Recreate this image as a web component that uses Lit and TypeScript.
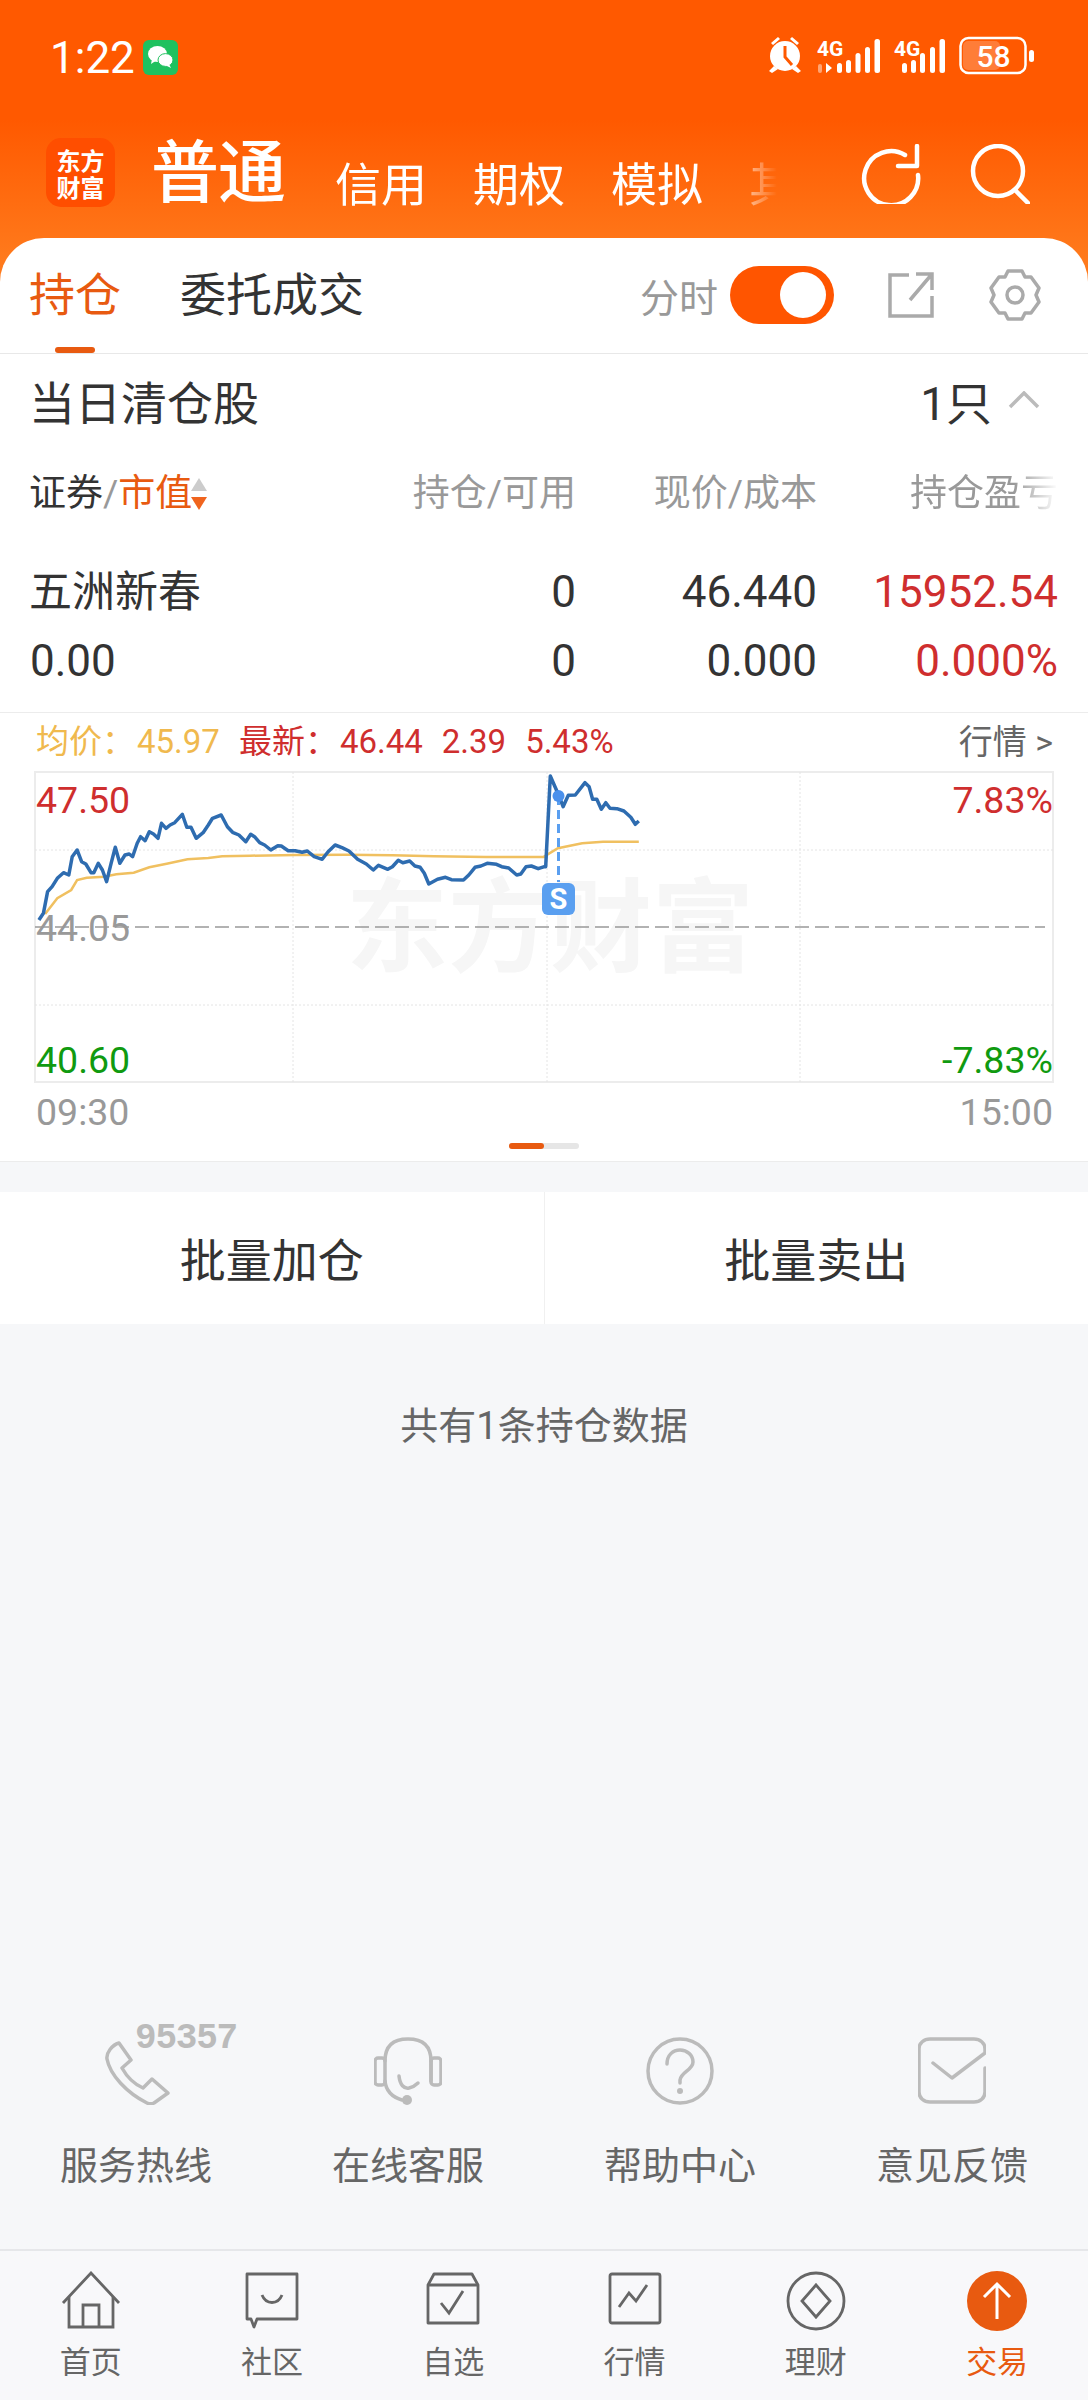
import { LitElement, html, css, svg } from "lit";
import { customElement } from "lit/decorators.js";

const p3: number[][] = [[112,630],[125,610],[137,545],[150,530],[165,505],[183,488],[198,495],[208,440],[222,420],[235,455],[247,462],[262,488],[270,488],[283,460],[295,480],[307,515],[320,460],[332,412],[345,460],[360,435],[372,432],[382,440],[395,400],[405,380],[418,392],[430,365],[442,372],[455,385],[465,340],[478,355],[490,345],[503,338],[525,313],[538,352],[550,352],[565,385],[585,368],[600,345],[612,325],[637,315],[655,350],[670,367],[688,375],[708,395],[722,373],[733,380],[748,398],[762,405],[780,420],[800,407],[810,408],[830,422],[850,422],[870,427],[885,423],[905,440],[928,448],[945,425],[965,405],[985,413],[1005,423],[1030,448],[1055,462],[1075,480],[1090,466],[1117,478],[1130,470],[1147,451],[1160,458],[1180,453],[1195,468],[1210,472],[1222,490],[1235,522],[1260,508],[1283,502],[1300,509],[1335,510],[1350,495],[1368,472],[1385,468],[1403,460],[1430,463],[1445,470],[1465,474],[1488,495],[1500,492],[1515,470],[1530,468],[1550,476],[1568,470]];
const p4: number[][] = [[5,470],[18,198],[42,255],[55,290],[70,256],[90,255],[118,218],[130,230],[140,268],[152,268],[165,298],[178,278],[190,295],[210,296],[230,303],[250,322],[263,343],[273,333]];
const y3: number[][] = [[130,612],[165,565],[205,540],[222,510],[250,503],[300,500],[335,493],[385,488],[430,472],[480,461],[540,448],[600,444],[640,439],[720,437],[850,435],[1000,434],[1130,436],[1250,439],[1400,441],[1568,441]];
const y4: number[][] = [[0,440],[40,415],[110,400],[170,395],[273,395]];
const pts = (a: number[][], b: number[][]) =>
  [...a.map(([x, y]) => [x / 2.88, y / 3 + 710]), ...b.map(([x, y]) => [544 + x / 2.88, y / 3 + 710])]
    .map(([x, y]) => `${x.toFixed(1)},${y.toFixed(1)}`)
    .join(" ");

const services = [
  { label: "服务热线", icon: svg`<path d="M17 6L29 23L20 31C25 40 32 47 41 51L50 42L66 56L52 66C50 67 47 67 45 66C25 56 8 38 5 22C4 16 10 8 17 6Z"/>` },
  { label: "在线客服", icon: svg`<path d="M11 24C11 8 20 2 34 2C48 2 57 8 57 24M11 44C12 54 18 60 28 63"/><path d="M57 44V24"/><rect x="1" y="21" width="10" height="27" rx="3"/><rect x="57" y="21" width="10" height="27" rx="3"/><path d="M25 39C26 48 30 52 35 51C39 50 42 48 44 46"/><circle cx="33" cy="63" r="5" fill="currentColor" stroke="none"/>` },
  { label: "帮助中心", icon: svg`<circle cx="34" cy="34" r="32"/><path d="M21 27C21 18 27 13 34 13C41 13 47 18 47 25C47 33 35 35 34 43V46"/><circle cx="34" cy="54" r="3" fill="currentColor" stroke="none"/>` },
  { label: "意见反馈", icon: svg`<path d="M67 31V55C67 61 62 65 56 65H12C6 65 1 61 1 55V12C1 6 6 2 12 2H56C62 2 67 6 67 12V16L34 41L15 26"/>` },
];

const navItems = [
  { label: "首页", icon: svg`<path d="M2 32L30 2L58 32"/><path d="M8 26V56H52V26"/><path d="M22 56V34H38V56"/>` },
  { label: "社区", icon: svg`<path d="M5 3H55V48H15L12 56L9 48H5Z" stroke-linejoin="round"/><path d="M20 24C24 34 36 34 40 24"/>` },
  { label: "自选", icon: svg`<path d="M5 14L11 3H49L55 14V52H5Z" stroke-linejoin="round"/><path d="M5 14H55"/><path d="M18 32L26 42L40 20"/>` },
  { label: "行情", icon: svg`<rect x="5" y="3" width="50" height="49" rx="2"/><path d="M14 36L24 22L31 30L42 14"/>` },
  { label: "理财", icon: svg`<circle cx="30" cy="30" r="28"/><path d="M30 14L44 30L30 46L16 30Z"/>` },
];

@customElement("app-root")
export class AppRoot extends LitElement {
  static styles = css`
    :host { display: flex; flex-direction: column; width: 1088px; height: 2400px; background: #f6f7f9; overflow: hidden;
      font-family: Roboto, "Noto Sans CJK SC", sans-serif; color: #333; }
    svg { display: block; }
    .top { height: 290px; margin-bottom: -52px; background: linear-gradient(#ff5900 0, #ff5900 120px, #ff7a1c 260px); color: #fff; flex: none; }
    .status { height: 114px; display: flex; align-items: center; padding: 0 50px; }
    .time { font-size: 44px; line-height: 54px; width: 93px; position: relative; top: 1px; }
    .wx { width: 35px; height: 35px; background: #1fc15f; border-radius: 6px; display: flex; align-items: center; justify-content: center; }
    .sb-right { margin-left: auto; margin-right: -2px; }
    .head { height: 124px; display: flex; align-items: flex-start; padding-left: 46px; }
    .logo { width: 69px; height: 69px; margin-top: 24px; background: #ff4e00; border-radius: 15px; display: flex; flex-direction: column; align-items: center; justify-content: center;
      font-size: 24px; line-height: 27px; font-weight: 700; font-family: "Noto Sans CJK SC", sans-serif; }
    .main-tab { font-size: 68px; line-height: 90px; margin-left: 36px; margin-top: 15px; letter-spacing: -1px; font-weight: 500; width: 184px; flex: none; }
    .scroll { display: flex; gap: 46px; margin-top: 40px; width: 442px; flex: none; overflow: hidden; font-size: 46px; line-height: 62px; white-space: nowrap;
      -webkit-mask-image: linear-gradient(90deg, #000 88%, transparent 100%); mask-image: linear-gradient(90deg, #000 88%, transparent 100%); }
    .scroll span { flex: none; }
    .ic-head { width: 60px; height: 60px; flex: none; margin-top: 30px; }
    .ic-r { margin-left: 84px; }
    .ic-s { margin-left: 49px; }
    .card { background: #fff; border-radius: 44px 44px 0 0; flex: none; position: relative; }
    .tabs { height: 116px; display: flex; align-items: center; padding: 0 46px 0 29px; border-bottom: 1px solid #e8e8e8; position: relative; box-sizing: border-box; }
    .tab { font-size: 46px; line-height: 60px; margin-top: -2px; }
    .tab.on { color: #e85a10; width: 151px; }
    .under { position: absolute; left: 55px; top: 109px; width: 40px; height: 6px; border-radius: 3px; background: #e85a10; }
    .fs { margin-left: auto; font-size: 39px; color: #999; margin-right: 12px; margin-top: -1px; }
    .toggle { width: 104px; height: 58px; border-radius: 29px; background: #ff5500; position: relative; margin-top: -2px; }
    .knob { position: absolute; right: 8px; top: 6px; width: 46px; height: 46px; border-radius: 50%; background: #fff; }
    .tabs .share { margin-left: 54px; margin-top: -2px; }
    .tabs .gear { margin-left: 54px; margin-top: -2px; }
    .sec { height: 68px; display: flex; align-items: center; padding: 0 48px 0 29px; font-size: 46px; margin-top: 12px; }
    .sec .n { margin-left: auto; margin-right: 16px; }
    .grid { display: grid; grid-template-columns: 1fr 241px 241px 241px; padding: 0 30px 0 30px; text-align: right; }
    .grid > :first-child { text-align: left; }
    .thead { height: 76px; margin-top: 22px; align-items: center; font-size: 37px; color: #999; line-height: 50px; }
    .thead .f { color: #333; display: flex; align-items: center; margin-left: -1px; }
    .thead .slash { color: #999; }
    .thead .o { color: #e85a10; }
    .sort { display: flex; flex-direction: column; gap: 6px; margin-left: -1px; }
    .sort i { display: block; width: 0; height: 0; border-left: 8px solid transparent; border-right: 8px solid transparent; }
    .sort .u { border-bottom: 13px solid #ccc; }
    .sort .d { border-top: 13px solid #f0641e; }
    .fade { -webkit-mask-image: linear-gradient(90deg, #000 70%, transparent 100%); mask-image: linear-gradient(90deg, #000 70%, transparent 100%); justify-self: end; }
    .row { font-size: 44px; line-height: 69px; color: #333; }
    .row1 { margin-top: 26px; }
    .row2 { padding-bottom: 16px; }
    .red { color: #cf2e2e; }
    .name { font-size: 43px; margin-left: -1px; }
    .chart { height: 450px; position: relative; border-top: 1px solid #ececec; border-bottom: 1px solid #ececec; box-sizing: border-box; background: #fff; overflow: hidden; }
    .plot { position: absolute; left: 0; top: -1px; width: 1088px; height: 450px; }
    .info { position: absolute; left: 36px; right: 35px; top: 7px; height: 44px; display: flex; font-size: 33px; line-height: 44px; white-space: pre; }
    .y { color: #f0b94e; }
    .g3 { margin-left: 2px; } .g20 { margin-left: 19px; } .g22 { margin-left: 19px; }
    .more { margin-left: auto; color: #666; font-size: 34px; }
    .lab { position: absolute; font-size: 37.5px; line-height: 44px; }
    .l { left: 36px; } .rt { right: 35px; }
    .green { color: #109a10; }
    .gray { color: #999; }
    .wm { position: absolute; left: 346px; top: 147px; font-size: 102px; line-height: 120px; font-weight: 700; color: #f6f6f6; white-space: nowrap; font-family: "Noto Sans CJK SC", sans-serif; }
    .dots { position: absolute; left: 509px; top: 430px; width: 70px; height: 6px; border-radius: 3px; background: #e6e6e6; }
    .dots i { display: block; width: 35px; height: 6px; border-radius: 3px; background: #e85a10; }
    .btns { margin-top: 30px; height: 132px; background: #fff; display: flex; font-size: 46px; flex: none; }
    .btns div { flex: 1; display: flex; align-items: center; justify-content: center; padding-bottom: 2px; box-sizing: border-box; }
    .btns div + div { border-left: 1px solid #f0f0f0; }
    .count { text-align: center; font-size: 38px; line-height: 50px; color: #666; margin-top: 77px; flex: none; }
    .svc { margin-top: auto; display: grid; grid-template-columns: repeat(4, 272px); flex: none; }
    .svc-i { display: flex; flex-direction: column; align-items: center; color: #666; font-size: 38px; line-height: 50px; position: relative; }
    .svc-i svg { width: 68px; height: 68px; color: #bbb; margin-bottom: 36px; }
    .num { position: absolute; left: 135px; top: -15px; font-size: 36px; line-height: 34px; font-weight: 700; color: #bbb; font-family: "Liberation Mono", monospace; letter-spacing: -1.2px; }
    .nav { margin-top: 58px; height: 151px; box-sizing: border-box; border-top: 2px solid #e6e7ea; background: #f8f8fa; display: grid; grid-template-columns: repeat(6, 181.3px); flex: none; }
    .nav-i { display: flex; flex-direction: column; align-items: center; padding-top: 20px; font-size: 31px; line-height: 42px; color: #666; }
    .nav-i svg { width: 60px; height: 60px; margin-bottom: 11px; }
    .nav-i.act { color: #e85a10; }
  `;

  render() {
    return html`
      <div class="top">
        <div class="status">
          <span class="time">1:22</span>
          <span class="wx"><svg width="27" height="24" viewBox="0 0 27 24" fill="#fff"><ellipse cx="10.5" cy="9" rx="9.5" ry="8"/><path d="M5 14L4 19L10 15Z"/><ellipse cx="18.5" cy="15" rx="7.5" ry="6.4" stroke="#1fc15f"/><path d="M22 19L24 23L18 20Z"/></svg></span>
          <svg class="sb-right" width="280" height="50" viewBox="760 32 280 50">
            <g fill="#fff">
              <circle cx="785" cy="56" r="15"/>
              <path d="M771 43L778 37L780 39L773 45ZM799 43L792 37L790 39L797 45ZM774 66L769 71L772 73L778 69ZM796 66L801 71L798 73L792 69Z"/>
              <rect x="818" y="64" width="4" height="9" rx="2" opacity=".45"/>
              <path d="M826 63V73L832 68Z"/>
              <rect x="837" y="63" width="5" height="10" rx="2.5"/><rect x="846" y="60" width="5" height="13" rx="2.5"/><rect x="855.500" y="53" width="5" height="20" rx="2.5"/><rect x="865" y="47" width="5" height="26" rx="2.500"/><rect x="874.500" y="39" width="5.500" height="34" rx="2.500"/>
              <rect x="902" y="63" width="5" height="10" rx="2.5"/><rect x="911" y="60" width="5" height="13" rx="2.5"/><rect x="920" y="53" width="5" height="20" rx="2.5"/><rect x="930" y="47" width="5" height="26" rx="2.500"/><rect x="939.500" y="39" width="5.500" height="34" rx="2.500"/>
              <rect x="1029" y="50" width="5" height="12" rx="2.500"/>
              <text x="817" y="56" font-size="21" font-weight="700" font-family="Roboto, sans-serif">4G</text>
              <text x="894" y="56" font-size="21" font-weight="700" font-family="Roboto, sans-serif">4G</text>
            </g>
            <rect x="960.500" y="38" width="65" height="35" rx="8" fill="none" stroke="#fff" stroke-width="2.500"/>
            <rect x="963" y="41" width="37" height="29" rx="5" fill="#fff" opacity=".22"/>
            <text x="993.500" y="67" text-anchor="middle" font-size="30" font-family="Roboto, sans-serif" font-weight="500" fill="#fff">58</text>
            <path d="M785 46V57L792 65" fill="none" stroke="#ff5900" stroke-width="3"/>
          </svg>
        </div>
        <div class="head">
          <div class="logo"><span>东方</span><span>财富</span></div>
          <div class="main-tab">普通</div>
          <div class="scroll"><span>信用</span><span>期权</span><span>模拟</span><span>其他</span></div>
          <svg class="ic-head ic-r" viewBox="0 0 60 60" fill="none" stroke="currentColor" stroke-width="4.5" stroke-linecap="round" stroke-linejoin="round"><path d="M44 11A27 27 0 1 0 57 31"/><path d="M56 2V22H37"/></svg>
          <svg class="ic-head ic-s" viewBox="0 0 60 60" fill="none" stroke="currentColor" stroke-width="4.5" stroke-linecap="round"><circle cx="28" cy="27" r="25"/><path d="M45 46L58 59"/></svg>
        </div>
      </div>
      <div class="card">
        <div class="tabs">
          <span class="tab on">持仓</span><span class="tab">委托成交</span>
          <i class="under"></i>
          <span class="fs">分时</span>
          <span class="toggle"><i class="knob"></i></span>
          <svg class="share" width="46" height="46" viewBox="0 0 46 46" fill="none" stroke="#aaa" stroke-width="3.5"><path d="M21 3H2V44H44V24"/><path d="M44 2L22 28M28 2H44V18"/></svg>
          <svg class="gear" width="54" height="54" viewBox="0 0 54 54" fill="none" stroke="#aaa" stroke-width="3.5" stroke-linejoin="round"><path d="M20 3H34L37 9L43 9L51 20L48 27L51 34L43 45L37 45L34 51H20L17 45L11 45L3 34L6 27L3 20L11 9L17 9Z"/><circle cx="27" cy="27" r="8"/></svg>
        </div>
        <div class="sec"><span>当日清仓股</span><span class="n">1只</span>
          <svg width="32" height="18" viewBox="0 0 32 18" fill="none" stroke="#bbb" stroke-width="3.5"><path d="M2 16L16 2L30 16"/></svg>
        </div>
        <div class="grid thead">
          <div class="f">证券<span class="slash">/</span><span class="o">市值</span><span class="sort"><i class="u"></i><i class="d"></i></span></div>
          <div>持仓/可用</div><div>现价/成本</div><div class="fade">持仓盈亏</div>
        </div>
        <div class="grid row row1"><div class="name">五洲新春</div><div>0</div><div>46.440</div><div class="red">15952.54</div></div>
        <div class="grid row row2"><div>0.00</div><div>0</div><div>0.000</div><div class="red">0.000%</div></div>
        <div class="chart">
          <div class="wm">东方财富</div>
          <svg class="plot" viewBox="0 712 1088 450" fill="none">
            <rect x="35" y="772" width="1018" height="310" stroke="#ececec" stroke-width="2"/>
            <g stroke="#e4e4e4" stroke-width="1" stroke-dasharray="2 2">
              <path d="M35 850H1053M35 1005H1053M293 772V1082M547 772V1082M800 772V1082"/>
            </g>
            <path d="M35 927H1045" stroke="#999" stroke-width="1.5" stroke-dasharray="14 6"/>
            <polyline points="${pts(y3, y4)}" stroke="#f0c060" stroke-width="2.5"/>
            <polyline points="${pts(p3, p4)}" stroke="#2e6cb0" stroke-width="3.5" stroke-linejoin="round"/>
            <path d="M558.5 796V882" stroke="#5a9ff0" stroke-width="3" stroke-dasharray="9 5"/>
            <circle cx="558.5" cy="796" r="6" fill="#4a90ec"/>
            <rect x="542" y="883" width="33" height="32" rx="6" fill="#5a9ff0"/>
            <text x="558.5" y="909" text-anchor="middle" font-size="29" font-weight="700" fill="#fff" font-family="Roboto, sans-serif">S</text>
          </svg>
          <div class="info"><span class="y">均价：</span><span class="y g3">45.97</span><span class="red g20">最新：</span><span class="red g3">46.44</span><span class="red g22">2.39</span><span class="red g22">5.43%</span><span class="more">行情 &gt;</span></div>
          <div class="lab l red" style="top:65px">47.50</div>
          <div class="lab rt red" style="top:65px">7.83%</div>
          <div class="lab l gray" style="top:193px">44.05</div>
          <div class="lab l green" style="top:325px">40.60</div>
          <div class="lab rt green" style="top:325px">-7.83%</div>
          <div class="lab l gray" style="top:377px">09:30</div>
          <div class="lab rt gray" style="top:377px">15:00</div>
          <div class="dots"><i></i></div>
        </div>
      </div>
      <div class="btns"><div>批量加仓</div><div>批量卖出</div></div>
      <div class="count">共有1条持仓数据</div>
      <div class="svc">
        ${services.map((s, i) => html`<div class="svc-i">
          <svg viewBox="0 0 68 68" fill="none" stroke="currentColor" stroke-width="3.5" stroke-linecap="round" stroke-linejoin="round">${s.icon}</svg>
          ${i === 0 ? html`<span class="num">95357</span>` : ""}
          <span>${s.label}</span>
        </div>`)}
      </div>
      <div class="nav">
        ${navItems.map((n) => html`<div class="nav-i">
          <svg viewBox="0 0 60 60" fill="none" stroke="#666" stroke-width="2.8">${n.icon}</svg>
          <span>${n.label}</span>
        </div>`)}
        <div class="nav-i act">
          <svg viewBox="0 0 60 60"><circle cx="30" cy="30" r="30" fill="#e85a10"/><path d="M30 48V13M17 26L30 13L43 26" fill="none" stroke="#fff" stroke-width="3"/></svg>
          <span>交易</span>
        </div>
      </div>
    `;
  }
}
